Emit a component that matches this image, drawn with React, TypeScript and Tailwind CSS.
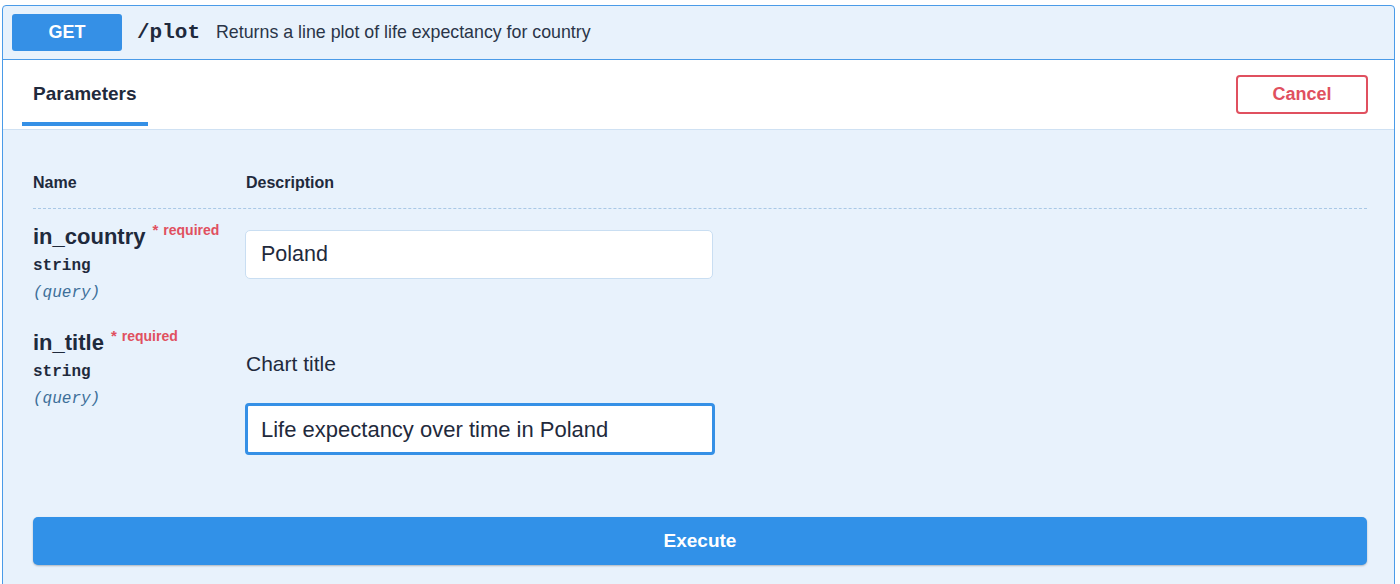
import React from "react";

const sans = { fontFamily: '"Liberation Sans", Arial, sans-serif' };

const ParamName = ({ name }: { name: string }) => {
  return (
    <div className="flex flex-col">
      <div className="flex items-start">
        <span className="text-[22px] leading-[26px] font-semibold text-[#1f2a3c]">{name}</span>
        <span className="ml-[7px] -mt-[2px] text-[14px] leading-[16px] font-bold text-[#e0505f]">
          <span className="text-[15px] mr-[5px]">*</span>required
        </span>
      </div>
      <span className="mt-[6px] font-['Liberation_Mono',monospace] font-bold text-[16px] leading-[20px] text-[#1f2a3c]">
        string
      </span>
      <span className="mt-[7px] font-['Liberation_Mono',monospace] italic text-[16px] leading-[20px] text-[#3d6f99]">
        (query)
      </span>
    </div>
  );
};

export default function App() {
  return (
    <div className="w-[1400px] h-[584px] bg-white overflow-hidden pt-[5px] pl-[2px]" style={sans}>
      <div className="w-[1393px] h-[600px] border border-[#4a9be8] rounded-t-[4px] bg-[#e8f2fc]">
        {/* summary */}
        <div className="h-[54px] flex items-center pl-[9px] border-b border-[#4a9be8]">
          <div className="w-[110px] h-[37px] rounded-[3px] bg-[#3590e6] flex items-center justify-center text-white font-bold text-[18px]">
            GET
          </div>
          <span className="ml-[15px] font-['Liberation_Mono',monospace] font-bold text-[21px] text-[#1f2a3c]">
            /plot
          </span>
          <span className="ml-[16px] text-[17.8px] text-[#2a3548]">
            Returns a line plot of life expectancy for country
          </span>
        </div>

        {/* tab header */}
        <div className="h-[70px] bg-white flex items-stretch justify-between pl-[19px] pr-[26px] border-b border-[#cfe1f3]">
          <div className="flex flex-col justify-end">
            <div className="px-[11px] pb-[14px] text-[19px] font-bold text-[#1f2a3c]">Parameters</div>
            <div className="w-[126px] h-[4px] bg-[#3590e6] mb-[3px]" />
          </div>
          <div className="flex items-center">
            <button className="w-[132px] h-[39px] rounded-[4px] border-2 border-[#e0505f] text-[#e0505f] font-bold text-[18px] bg-white">
              Cancel
            </button>
          </div>
        </div>

        {/* parameters */}
        <div className="pl-[30px] pr-[27px] pt-[41px]">
          <div className="flex text-[16px] font-bold text-[#1f2a3c] pb-[13px] border-b border-dashed border-[#a9c8e6]">
            <div className="w-[213px]">Name</div>
            <div>Description</div>
          </div>

          <div className="flex pt-[15px]">
            <div className="w-[212px]">
              <ParamName name="in_country" />
            </div>
            <div className="pt-[6px]">
              <div className="w-[468px] h-[49px] bg-white rounded-[5px] border border-[#c9def2] flex items-center pl-[15px] text-[21.5px] text-[#1f2a3c]">
                Poland
              </div>
            </div>
          </div>

          <div className="flex pt-[27px]">
            <div className="w-[212px]">
              <ParamName name="in_title" />
            </div>
            <div className="pt-[22px]">
              <div className="text-[21px] leading-[24px] text-[#1f2a3c] pl-[1px]">Chart title</div>
              <div className="mt-[27px] w-[470px] h-[52px] bg-white rounded-[4px] border-[3px] border-[#3590e6] flex items-center pl-[13px] text-[22px] text-[#1f2a3c]">
                Life expectancy over time in Poland
              </div>
            </div>
          </div>

          <div className="mt-[62px] h-[48px] rounded-[5px] bg-[#3191e8] shadow-[0_1px_2px_rgba(0,0,0,0.25)] flex items-center justify-center text-white font-bold text-[19px]">
            Execute
          </div>
        </div>
      </div>
    </div>
  );
}
